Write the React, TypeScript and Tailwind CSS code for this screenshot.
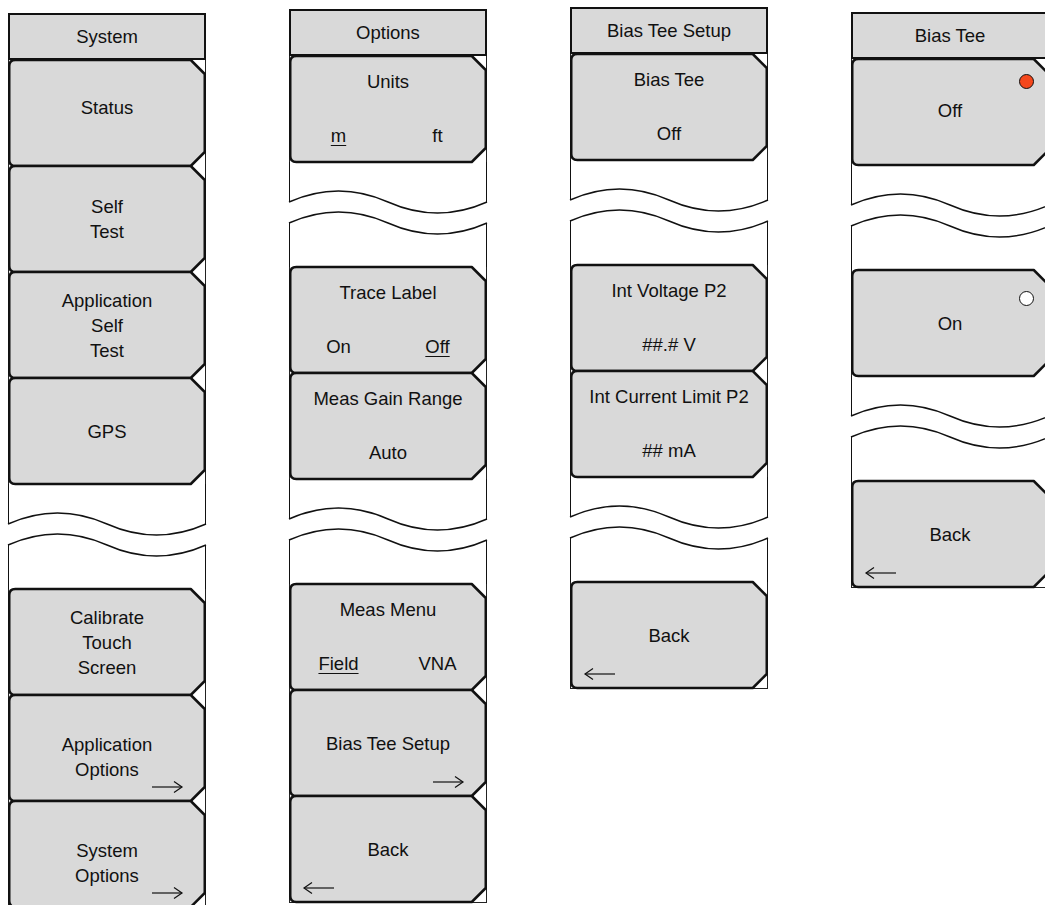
import React from "react";

type Val = { t: string; u?: boolean };

type Slot =
  | {
      kind: "btn";
      lines?: string[];
      label?: string;
      values?: Val[];
      arrow?: "right" | "left";
      dot?: "on" | "off";
      cls?: string;
    }
  | { kind: "gap" };

type Menu = { title: string; top: string; slots: Slot[] };

const W = 198;
const H = 106;
const GAP_H = 105;

const menus: Menu[] = [
  {
    title: "System",
    top: "mt-[13px]",
    slots: [
      { kind: "btn", lines: ["Status"], cls: "pb-[12px]" },
      { kind: "btn", lines: ["Self", "Test"] },
      { kind: "btn", lines: ["Application", "Self", "Test"] },
      { kind: "btn", lines: ["GPS"] },
      { kind: "gap" },
      { kind: "btn", lines: ["Calibrate", "Touch", "Screen"] },
      { kind: "btn", lines: ["Application", "Options"], arrow: "right", cls: "pt-[18px]" },
      { kind: "btn", lines: ["System", "Options"], arrow: "right", cls: "pt-[18px]" },
    ],
  },
  {
    title: "Options",
    top: "mt-[9px]",
    slots: [
      { kind: "btn", label: "Units", values: [{ t: "m", u: true }, { t: "ft" }] },
      { kind: "gap" },
      { kind: "btn", label: "Trace Label", values: [{ t: "On" }, { t: "Off", u: true }] },
      { kind: "btn", label: "Meas Gain Range", values: [{ t: "Auto" }] },
      { kind: "gap" },
      { kind: "btn", label: "Meas Menu", values: [{ t: "Field", u: true }, { t: "VNA" }] },
      { kind: "btn", lines: ["Bias Tee Setup"], arrow: "right" },
      { kind: "btn", lines: ["Back"], arrow: "left" },
    ],
  },
  {
    title: "Bias Tee Setup",
    top: "mt-[7px]",
    slots: [
      { kind: "btn", label: "Bias Tee", values: [{ t: "Off" }] },
      { kind: "gap" },
      { kind: "btn", label: "Int Voltage P2", values: [{ t: "##.# V" }] },
      { kind: "btn", label: "Int Current Limit P2", values: [{ t: "## mA" }] },
      { kind: "gap" },
      { kind: "btn", lines: ["Back"], arrow: "left" },
    ],
  },
  {
    title: "Bias Tee",
    top: "mt-[12px]",
    slots: [
      { kind: "btn", lines: ["Off"], dot: "on", cls: "pb-[4px]" },
      { kind: "gap" },
      { kind: "btn", lines: ["On"], dot: "off" },
      { kind: "gap" },
      { kind: "btn", lines: ["Back"], arrow: "left" },
    ],
  },
];

function keyShape() {
  const xl = 1.25;
  const xr = W - 1.25;
  const c = 14;
  const r = 6;
  return `M${xl + r},0 H${xr - c} L${xr},${c} V${H - c} L${xr - c},${H} H${xl + r} Q${xl},${H} ${xl},${H - r} V${r} Q${xl},0 ${xl + r},0 Z`;
}

function Arrow({ dir }: { dir: "right" | "left" }) {
  if (dir === "right") {
    return (
      <svg width="33" height="14" className="absolute right-[22px] bottom-[7px]" fill="none" stroke="#111" strokeWidth="1.2">
        <line x1="1" y1="7" x2="31" y2="7" />
        <polyline points="23,1.5 31,7 23,12.5" />
      </svg>
    );
  }
  return (
    <svg width="33" height="14" className="absolute left-[13px] bottom-[7px]" fill="none" stroke="#111" strokeWidth="1.2">
      <line x1="2" y1="7" x2="32" y2="7" />
      <polyline points="10,1.5 2,7 10,12.5" />
    </svg>
  );
}

function Key({ slot, last }: { slot: Extract<Slot, { kind: "btn" }>; last: boolean }) {
  return (
    <div className="relative h-[106px] w-full shrink-0">
      <svg className="absolute inset-0 w-full h-full overflow-visible">
        <line x1="0.5" y1="0" x2="0.5" y2={H} stroke="#222" strokeWidth="1" />
        <line x1={W - 0.5} y1="0" x2={W - 0.5} y2={H} stroke="#222" strokeWidth="1" />
        {last && <line x1="0" y1={H + 0.5} x2={W} y2={H + 0.5} stroke="#222" strokeWidth="1" />}
        <path d={keyShape()} fill="#d9d9d9" stroke="#111" strokeWidth="2.5" strokeLinejoin="round" />
      </svg>

      {slot.lines && (
        <div className={`relative h-full flex flex-col items-center justify-center leading-[25px] ${slot.cls ?? ""}`}>
          {slot.lines.map((l, i) => (
            <span key={i}>{l}</span>
          ))}
        </div>
      )}

      {slot.label && (
        <div className="relative h-full flex flex-col justify-between pt-[13px] pb-[14px] leading-[25px]">
          <div className="text-center whitespace-nowrap">{slot.label}</div>
          {slot.values && slot.values.length > 1 ? (
            <div className="grid grid-cols-2 text-center">
              {slot.values.map((v, i) => (
                <span key={i} className={v.u ? "underline underline-offset-[3px] decoration-1" : ""}>{v.t}</span>
              ))}
            </div>
          ) : (
            <div className="text-center">{slot.values?.[0].t}</div>
          )}
        </div>
      )}

      {slot.dot && (
        <div
          className={`absolute right-[15px] w-[15px] h-[15px] rounded-full border border-[#111] ${
            slot.dot === "on" ? "top-[15px] bg-[#f4471c]" : "top-[21px] bg-white"
          }`}
        />
      )}

      {slot.arrow && <Arrow dir={slot.arrow} />}
    </div>
  );
}

function Break() {
  // torn-off section of the menu strip
  const wave = (b: number) => `M0,${b} Q${W / 4},${b - 22} ${W / 2},${b} T${W},${b}`;
  return (
    <div className="relative h-[105px] w-full shrink-0">
      <svg className="absolute inset-0 w-full h-full overflow-visible" fill="none" stroke="#111">
        <line x1="0.5" y1="0" x2="0.5" y2="40" strokeWidth="1" />
        <line x1="0.5" y1="61" x2="0.5" y2={GAP_H} strokeWidth="1" />
        <line x1={W - 0.5} y1="0" x2={W - 0.5} y2="40" strokeWidth="1" />
        <line x1={W - 0.5} y1="61" x2={W - 0.5} y2={GAP_H} strokeWidth="1" />
        <path d={wave(40)} strokeWidth="1.5" />
        <path d={wave(61)} strokeWidth="1.5" />
      </svg>
    </div>
  );
}

export default function App() {
  return (
    <div className="w-[1045px] h-[905px] overflow-hidden bg-white flex items-start gap-[83px] pl-[8px] font-['Liberation_Sans',Arial,sans-serif] text-[18.5px] text-[#111]">
      {menus.map((m) => (
        <div key={m.title} className={`w-[198px] shrink-0 flex flex-col ${m.top}`}>
          <div className="h-[47px] border-2 border-[#111] bg-[#d9d9d9] flex items-center justify-center">
            {m.title}
          </div>
          {m.slots.map((s, i) =>
            s.kind === "gap" ? (
              <Break key={i} />
            ) : (
              <Key key={i} slot={s} last={i === m.slots.length - 1} />
            )
          )}
        </div>
      ))}
    </div>
  );
}
